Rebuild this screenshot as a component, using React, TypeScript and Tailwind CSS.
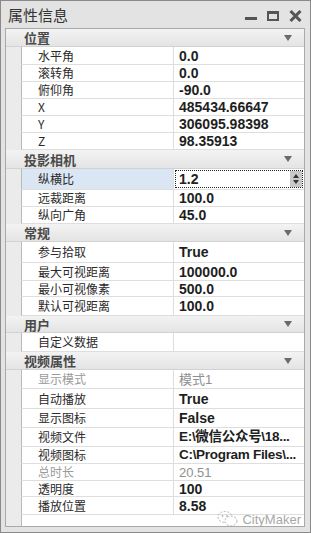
import React from "react";

type Row =
  | { kind: "cat"; label: string; h: string }
  | { kind: "prop"; label: string; value: string; h: string; dim?: boolean; sel?: boolean; tight?: boolean };

const rows: Row[] = [
  { kind: "cat", label: "位置", h: "h-[18px]" },
  { kind: "prop", label: "水平角", value: "0.0", h: "h-[18px]" },
  { kind: "prop", label: "滚转角", value: "0.0", h: "h-[17px]" },
  { kind: "prop", label: "俯仰角", value: "-90.0", h: "h-[17px]" },
  { kind: "prop", label: "X", value: "485434.66647", h: "h-[17px]" },
  { kind: "prop", label: "Y", value: "306095.98398", h: "h-[17px]" },
  { kind: "prop", label: "Z", value: "98.35913", h: "h-[17px]" },
  { kind: "cat", label: "投影相机", h: "h-[19px]" },
  { kind: "prop", label: "纵横比", value: "1.2", h: "h-[21px]", sel: true },
  { kind: "prop", label: "远裁距离", value: "100.0", h: "h-[17px]" },
  { kind: "prop", label: "纵向广角", value: "45.0", h: "h-[17px]" },
  { kind: "cat", label: "常规", h: "h-[18px]" },
  { kind: "prop", label: "参与拾取", value: "True", h: "h-[21px]" },
  { kind: "prop", label: "最大可视距离", value: "100000.0", h: "h-[18px]" },
  { kind: "prop", label: "最小可视像素", value: "500.0", h: "h-[16px]" },
  { kind: "prop", label: "默认可视距离", value: "100.0", h: "h-[19px]" },
  { kind: "cat", label: "用户", h: "h-[17px]" },
  { kind: "prop", label: "自定义数据", value: "", h: "h-[19px]" },
  { kind: "cat", label: "视频属性", h: "h-[18px]" },
  { kind: "prop", label: "显示模式", value: "模式1", h: "h-[19px]", dim: true },
  { kind: "prop", label: "自动播放", value: "True", h: "h-[20px]" },
  { kind: "prop", label: "显示图标", value: "False", h: "h-[19px]" },
  { kind: "prop", label: "视频文件", value: "E:\\微信公众号\\18...", h: "h-[19px]", tight: true },
  { kind: "prop", label: "视频图标", value: "C:\\Program Files\\...", h: "h-[17px]", tight: true },
  { kind: "prop", label: "总时长", value: "20.51", h: "h-[17px]", dim: true },
  { kind: "prop", label: "透明度", value: "100", h: "h-[16px]" },
  { kind: "prop", label: "播放位置", value: "8.58", h: "h-[18px]" },
];

function Arrow() {
  return (
    <svg width="8" height="6" viewBox="0 0 8 6" className="mr-[12px]">
      <path d="M0 0 L8 0 L4 6 Z" fill="#6a6a6a" />
    </svg>
  );
}

function CatRow({ label, h }: { label: string; h: string }) {
  return (
    <div
      className={`${h} flex items-center justify-between border-b border-[#d2d2d2] bg-gradient-to-b from-[#f3f3f3] to-[#e4e4e4]`}
    >
      <span className="pl-[18px] text-[13px] font-bold text-[#4a4a4a] font-['Noto_Sans_CJK_SC',sans-serif] leading-none">
        {label}
      </span>
      <Arrow />
    </div>
  );
}

function PropRow({ r }: { r: Extract<Row, { kind: "prop" }> }) {
  const labelColor = r.dim ? "text-[#9a9a9a]" : "text-[#2a2a2a]";
  return (
    <div className={`${r.h} flex ml-[15px]`}>
      <div
        className={`w-[153px] shrink-0 flex items-center pl-[16px] border-l border-b border-r border-l-[#b9b9b9] border-b-[#dedede] border-r-[#dedede] ${
          r.sel ? "bg-[#dbe6f4]" : "bg-white"
        }`}
      >
        <span
          className={`text-[12px] leading-none ${labelColor} font-['Noto_Sans_CJK_SC',sans-serif]`}
        >
          {r.label}
        </span>
      </div>
      {r.sel ? (
        <div className="flex-1 bg-white border-b border-[#dedede] p-[1px]">
          <div className="h-full flex items-center border border-dotted border-[#222] pl-[3px]">
            <span className="flex-1 text-[14px] font-bold text-[#222] font-['Liberation_Sans',sans-serif] leading-none">
              {r.value}
            </span>
            <div className="w-[12px] h-full bg-[#c9c9c9] flex flex-col items-center justify-center gap-[2px]">
              <svg width="6" height="4" viewBox="0 0 6 4">
                <path d="M3 0 L6 4 L0 4 Z" fill="#333" />
              </svg>
              <svg width="6" height="4" viewBox="0 0 6 4">
                <path d="M0 0 L6 0 L3 4 Z" fill="#333" />
              </svg>
            </div>
          </div>
        </div>
      ) : (
        <div className="flex-1 flex items-center bg-white border-b border-[#dedede] pl-[5px] overflow-hidden">
          <span
            className={`whitespace-nowrap leading-none font-['Liberation_Sans','Noto_Sans_CJK_SC',sans-serif] ${
              r.dim
                ? "text-[13px] text-[#8f8f8f] font-normal"
                : r.tight
                ? "text-[13.5px] tracking-[-0.3px] text-[#1e1e1e] font-bold"
                : "text-[14px] text-[#1e1e1e] font-bold"
            }`}
          >
            {r.value}
          </span>
        </div>
      )}
    </div>
  );
}

export default function App() {
  return (
    <div className="w-[311px] h-[533px] bg-[#e3e3e3] border border-[#8a8a8a] flex flex-col overflow-hidden">
      <div className="h-[27px] shrink-0 flex items-center justify-between pl-[7px] pr-[8px]">
        <span className="text-[15px] text-[#333] font-['Noto_Sans_CJK_SC',sans-serif] leading-none">
          属性信息
        </span>
        <div className="flex items-center gap-[10px] pt-[2px]">
          <div className="w-[12px] h-[3px] bg-[#555] mt-[6px]" />
          <div className="w-[12px] h-[10px] border-2 border-t-[3px] border-[#555]" />
          <svg width="13" height="12" viewBox="0 0 13 12">
            <path d="M1.5 1 L11.5 11 M11.5 1 L1.5 11" stroke="#555" strokeWidth="3" />
          </svg>
        </div>
      </div>
      <div className="relative ml-[4px] mr-[5px] mb-[5px] flex-1 bg-[#ebebeb] border border-[#a9a9a9] flex flex-col">
        {rows.map((r, i) =>
          r.kind === "cat" ? (
            <CatRow key={i} label={r.label} h={r.h} />
          ) : (
            <PropRow key={i} r={r} />
          )
        )}
        <div className="flex-1 ml-[15px] bg-white border-l border-[#b9b9b9]" />
        <div className="absolute right-[3px] bottom-[-2px] flex items-center gap-[3px]">
          <svg width="22" height="18" viewBox="0 0 22 18">
            <ellipse cx="8" cy="7" rx="7" ry="5.5" fill="none" stroke="#b5b5b5" strokeWidth="1" strokeDasharray="2 1.5" />
            <ellipse cx="14" cy="11" rx="6" ry="4.8" fill="white" stroke="#b5b5b5" strokeWidth="1" strokeDasharray="2 1.5" />
            <circle cx="5.5" cy="6" r="0.9" fill="#b5b5b5" />
            <circle cx="10" cy="6" r="0.9" fill="#b5b5b5" />
          </svg>
          <span className="text-[13px] text-[#a8a8a8] font-['Liberation_Sans',sans-serif] leading-none">
            CityMaker
          </span>
        </div>
      </div>
    </div>
  );
}
